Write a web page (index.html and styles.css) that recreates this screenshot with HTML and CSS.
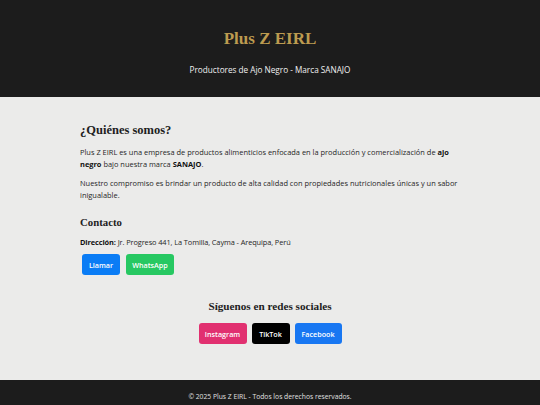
FILE: index.html
```html
<!DOCTYPE html>
<html lang="es">
<head>
<meta charset="utf-8">
<title>Plus Z EIRL</title>
<link rel="stylesheet" href="styles.css">
</head>
<body>
<header class="hero">
  <h1 class="brand">Plus Z EIRL</h1>
  <p class="tagline">Productores de Ajo Negro - Marca SANAJO</p>
</header>
<main class="main">
  <section class="about">
    <h2 class="h-section">¿Quiénes somos?</h2>
    <p class="text">Plus Z EIRL es una empresa de productos alimenticios enfocada en la producción y comercialización de <strong>ajo</strong> <strong>negro</strong> bajo nuestra marca <strong>SANAJO</strong>.</p>
    <p class="text">Nuestro compromiso es brindar un producto de alta calidad con propiedades nutricionales únicas y un sabor inigualable.</p>
    <h3 class="h-contact">Contacto</h3>
    <p class="address"><strong>Dirección:</strong> Jr. Progreso 441, La Tomilla, Cayma - Arequipa, Perú</p>
    <div class="btn-row">
      <a class="btn btn-call" href="#">Llamar</a>
      <a class="btn btn-wa" href="#">WhatsApp</a>
    </div>
  </section>
  <section class="social">
    <h3 class="h-social">Síguenos en redes sociales</h3>
    <div class="btn-row center">
      <a class="btn btn-ig" href="#">Instagram</a>
      <a class="btn btn-tt" href="#">TikTok</a>
      <a class="btn btn-fb" href="#">Facebook</a>
    </div>
  </section>
</main>
<footer class="footer">
  <p>© 2025 Plus Z EIRL - Todos los derechos reservados.</p>
</footer>
</body>
</html>
```
FILE: styles.css
```css
* { box-sizing: border-box; }
html, body { margin: 0; padding: 0; }
body {
  font-family: "Open Sans", "Noto Sans", sans-serif;
  background: #ebebea;
  color: #222;
  width: 540px;
  height: 405px;
  display: flex;
  flex-direction: column;
  overflow: hidden;
}
.hero {
  background: #1c1c1c;
  height: 97px;
  display: flex;
  flex-direction: column;
  align-items: center;
  padding-top: 28px;
}
.brand {
  margin: 0;
  font-family: "Liberation Serif", "DejaVu Serif", serif;
  font-weight: bold;
  font-size: 17px;
  line-height: 22px;
  color: #bc9b50;
}
.tagline {
  margin: 14px 0 0;
  font-size: 8.2px;
  line-height: 12px;
  color: #f0f0f0;
}
.main {
  flex: 1;
  padding: 24px 80px 0;
}
.h-section {
  margin: 0;
  font-family: "Liberation Serif", "DejaVu Serif", serif;
  font-weight: bold;
  font-size: 12.5px;
  line-height: 18px;
  color: #1e1e1e;
}
.text {
  margin: 7px 0 0;
  font-size: 7.45px;
  line-height: 12px;
  color: #262626;
}
.text strong, .address strong { color: #111; font-weight: 700; }
.h-contact {
  margin: 13px 0 0;
  font-family: "Liberation Serif", "DejaVu Serif", serif;
  font-weight: bold;
  font-size: 10.8px;
  line-height: 16px;
  color: #1e1e1e;
}
.address {
  margin: 7px 0 0;
  font-size: 7.4px;
  line-height: 10px;
  color: #262626;
  letter-spacing: -0.1px;
}
.btn-row {
  display: flex;
  gap: 6px;
  margin-top: 7px;
  padding-left: 2px;
}
.btn-row.center { justify-content: center; padding-left: 0; margin-top: 9px; gap: 5px; }
.btn {
  display: inline-flex;
  align-items: center;
  justify-content: center;
  height: 21px;
  padding: 0 6px;
  border-radius: 3px;
  color: #fff;
  font-size: 7.2px;
  font-weight: 600;
  text-decoration: none;
}
.btn-call { background: #0a7cf5; width: 38px; }
.btn-wa { background: #27c862; width: 48px; }
.btn-ig { background: #e13070; width: 48px; }
.btn-tt { background: #000; width: 38px; }
.btn-fb { background: #1877f2; width: 47px; }
.social {
  margin-top: 23px;
  text-align: center;
}
.h-social {
  margin: 0;
  font-family: "Liberation Serif", "DejaVu Serif", serif;
  font-weight: bold;
  font-size: 11.2px;
  line-height: 16px;
  color: #1e1e1e;
}
.footer {
  background: #1c1c1c;
  height: 25px;
  display: flex;
  align-items: center;
  justify-content: center;
  padding-top: 8px;
}
.footer p {
  margin: 0;
  font-size: 6.75px;
  color: #e0e0e0;
}
```
